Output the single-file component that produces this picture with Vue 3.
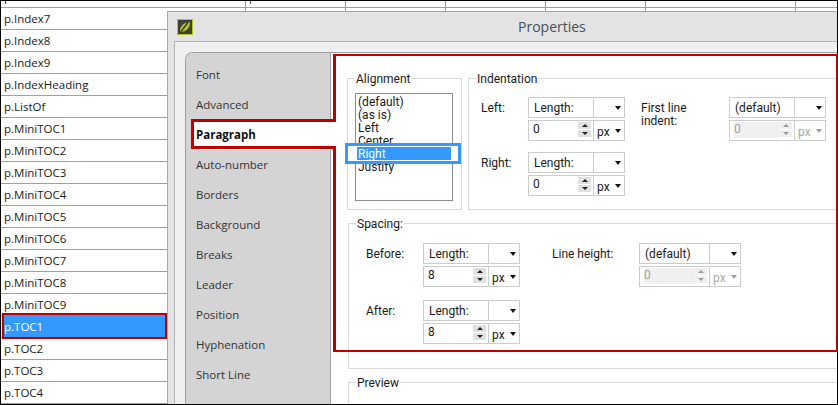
<script setup>
const styles = [
  'Index6', 'Index7', 'Index8', 'Index9', 'IndexHeading', 'ListOf',
  'MiniTOC1', 'MiniTOC2', 'MiniTOC3', 'MiniTOC4', 'MiniTOC5', 'MiniTOC6',
  'MiniTOC7', 'MiniTOC8', 'MiniTOC9', 'TOC1', 'TOC2', 'TOC3', 'TOC4',
]

const tabs = [
  'Font', 'Advanced', 'Paragraph', 'Auto-number', 'Borders', 'Background',
  'Breaks', 'Leader', 'Position', 'Hyphenation', 'Short Line',
]

const alignments = ['(default)', '(as is)', 'Left', 'Center', 'Right', 'Justify']
</script>

<template>
  <div class="app">
    <div class="screen">
      <div
        v-for="(name, i) in styles"
        :key="name"
        class="row"
        :class="{ cut: i === 0, picked: name === 'TOC1' }"
      >
        <div class="cell first"><span>p.{{ name }}</span></div>
        <div v-for="n in 5" :key="n" class="cell" :class="{ wide: n === 5 }">
          <span v-if="i === 0 && n === 1" class="tick">p</span>
        </div>
      </div>

      <div class="dialog">
        <div class="titlebar">
          <svg class="logo" width="16" height="16" viewBox="0 0 16 16">
            <rect x="0.5" y="0.5" width="15" height="15" fill="#3f3f36" stroke="#b4c41f" />
            <path d="M3 13C2.5 8 6 3.5 13 3C13.5 8.5 9.5 13 3 13Z" fill="#b2c225" />
            <path d="M3 14L12 2" stroke="#3f3f36" stroke-width="1.4" fill="none" />
          </svg>
          <span class="title">Properties</span>
        </div>

        <div class="body">
          <div class="panel">
            <div class="tabs">
              <div
                v-for="tab in tabs"
                :key="tab"
                class="tab"
                :class="{ active: tab === 'Paragraph' }"
              >{{ tab }}</div>
            </div>

            <div class="content">
              <div class="top-groups">
                <fieldset class="group align-group">
                  <legend>Alignment</legend>
                  <div class="listbox">
                    <div
                      v-for="a in alignments"
                      :key="a"
                      class="item"
                      :class="{ selected: a === 'Right' }"
                    ><span>{{ a }}</span></div>
                  </div>
                </fieldset>

                <fieldset class="group indent-group">
                  <legend>Indentation</legend>
                  <div class="indent-grid">
                    <div class="label">Left:</div>
                    <div class="ctl">
                      <div class="ctl-row">
                        <div class="main">Length:</div>
                        <div class="side"><i class="arrow"></i></div>
                      </div>
                      <div class="ctl-row">
                        <div class="main num">
                          <span class="value">0</span>
                          <div class="spin"><b><i class="up"></i></b><b><i class="down"></i></b></div>
                        </div>
                        <div class="side"><span class="unit">px</span><i class="arrow"></i></div>
                      </div>
                    </div>
                    <div class="label two-line far">First line<br>indent:</div>
                    <div class="ctl">
                      <div class="ctl-row">
                        <div class="main">(default)</div>
                        <div class="side"><i class="arrow"></i></div>
                      </div>
                      <div class="ctl-row off">
                        <div class="main num">
                          <span class="value">0</span>
                          <div class="spin"><b><i class="up"></i></b><b><i class="down"></i></b></div>
                        </div>
                        <div class="side"><span class="unit">px</span><i class="arrow"></i></div>
                      </div>
                    </div>
                    <div class="label">Right:</div>
                    <div class="ctl">
                      <div class="ctl-row">
                        <div class="main">Length:</div>
                        <div class="side"><i class="arrow"></i></div>
                      </div>
                      <div class="ctl-row">
                        <div class="main num">
                          <span class="value">0</span>
                          <div class="spin"><b><i class="up"></i></b><b><i class="down"></i></b></div>
                        </div>
                        <div class="side"><span class="unit">px</span><i class="arrow"></i></div>
                      </div>
                    </div>
                  </div>
                </fieldset>
              </div>

              <fieldset class="group spacing-group">
                <legend>Spacing:</legend>
                <div class="spacing-grid">
                  <div class="label">Before:</div>
                  <div class="ctl">
                    <div class="ctl-row">
                      <div class="main">Length:</div>
                      <div class="side"><i class="arrow"></i></div>
                    </div>
                    <div class="ctl-row">
                      <div class="main num">
                        <span class="value">8</span>
                        <div class="spin"><b><i class="up"></i></b><b><i class="down"></i></b></div>
                      </div>
                      <div class="side"><span class="unit">px</span><i class="arrow"></i></div>
                    </div>
                  </div>
                  <div class="label far-2">Line height:</div>
                  <div class="ctl long">
                    <div class="ctl-row">
                      <div class="main">(default)</div>
                      <div class="side"><i class="arrow"></i></div>
                    </div>
                    <div class="ctl-row off">
                      <div class="main num">
                        <span class="value">0</span>
                        <div class="spin"><b><i class="up"></i></b><b><i class="down"></i></b></div>
                      </div>
                      <div class="side"><span class="unit">px</span><i class="arrow"></i></div>
                    </div>
                  </div>
                  <div class="label">After:</div>
                  <div class="ctl">
                    <div class="ctl-row">
                      <div class="main">Length:</div>
                      <div class="side"><i class="arrow"></i></div>
                    </div>
                    <div class="ctl-row">
                      <div class="main num">
                        <span class="value">8</span>
                        <div class="spin"><b><i class="up"></i></b><b><i class="down"></i></b></div>
                      </div>
                      <div class="side"><span class="unit">px</span><i class="arrow"></i></div>
                    </div>
                  </div>
                </div>
              </fieldset>

              <fieldset class="group preview-group">
                <legend>Preview</legend>
              </fieldset>
            </div>
          </div>
        </div>
      </div>
    </div>

    <!-- red callout drawn over the tab and the page -->
    <svg class="callout" width="838" height="405" viewBox="0 0 838 405">
      <path
        fill="#c00000"
        fill-rule="evenodd"
        d="M333 54H838V352H333V149H191V119H333ZM336 56V122H194V146H336V350H836V56Z"
      />
    </svg>
  </div>
</template>

<style scoped>
.app {
  position: relative;
  width: 838px;
  height: 405px;
  overflow: hidden;
  font-family: "Open Sans", "Noto Sans", sans-serif;
  font-size: 11.5px;
  color: #1a1a1a;
  background: white;
}

.screen {
  position: relative;
  height: 100%;
  box-sizing: border-box;
  border: 1px solid black;
  overflow: hidden;
}

.row {
  display: flex;
  height: 22px;
  box-sizing: border-box;
  border-bottom: 1px solid #a0a0a0;
}

.row.cut {
  height: 7px;
}

.cell {
  flex: none;
  width: 100px;
  box-sizing: border-box;
  border-right: 1px solid #a0a0a0;
  display: flex;
  align-items: flex-end;
  overflow: hidden;
  padding-left: 3px;
  line-height: 21px;
}

.cell.first {
  width: 245px;
}

.cell.wide {
  width: 150px;
}

/* outlined row: sticks out a little past the row lines */
.row.picked {
  position: relative;
}

.row.picked::before {
  content: "";
  position: absolute;
  left: 1px;
  top: -3px;
  width: 165px;
  height: 26px;
  box-sizing: border-box;
  background: #3399ff;
  border: 2px solid #c00000;
}

.row.picked .first span {
  position: relative;
  color: white;
}

.row.picked .first {
  position: relative;
  overflow: visible;
  border-right-color: transparent;
}

.tick {
  color: #333;
}

.dialog {
  position: absolute;
  left: 166px;
  top: 10px;
  right: -1px;
  bottom: -1px;
  border: 1px solid #a8a8a8;
  border-right: none;
  background: #e3e3e3;
  display: flex;
  flex-direction: column;
}

.titlebar {
  flex: none;
  height: 29px;
  display: flex;
  align-items: center;
  padding-left: 9px;
}

.logo {
  flex: none;
}

.title {
  margin-left: 325px;
  font-size: 14px;
  color: #47505a;
}

.body {
  flex: 1;
  min-height: 0;
  margin-left: 6px;
  border: 1px solid #b5b5b5;
  border-right: none;
  border-bottom: none;
  background: #f0f0f0;
  padding: 10px 0 0 10px;
  display: flex;
}

.panel {
  flex: 1;
  min-width: 0;
  display: flex;
  border: 1px solid #a0a0a0;
  border-right: none;
  border-bottom: none;
  border-top-left-radius: 8px;
  overflow: hidden;
}

.tabs {
  flex: none;
  width: 145px;
  box-sizing: border-box;
  background: #d4d4d4;
  border-right: 1px solid #a0a0a0;
  padding-top: 7px;
}

.tab {
  height: 30px;
  line-height: 30px;
  padding-left: 10px;
  color: #333;
}

.tab.active {
  margin: 0 -1px 0 8px;
  padding-left: 2px;
  background: white;
  font-weight: 700;
  color: #111;
  position: relative;
}

.content {
  flex: 1;
  min-width: 0;
  background: white;
  padding: 17px 0 0 16px;
  font-family: Roboto, "Open Sans", sans-serif;
  font-size: 12px;
}

.top-groups {
  display: flex;
  gap: 6px;
}

.group {
  margin: 0;
  padding: 0;
  min-width: 0;
  border: 1px solid #d9d9d9;
  border-right: none;
}

.group legend {
  margin-left: 7px;
  padding: 0 1px;
  height: 16px;
  line-height: 18px;
}

.align-group {
  flex: none;
  width: 115px;
  box-sizing: border-box;
  border-right: 1px solid #d9d9d9;
}

.listbox {
  width: 98px;
  height: 108px;
  box-sizing: border-box;
  margin: 7px 0 8px 7px;
  border: 1px solid #8a8a94;
  padding-top: 1px;
}

.item {
  height: 13px;
  line-height: 15px;
  padding-left: 2px;
  white-space: nowrap;
}

.item.selected {
  position: relative;
  z-index: 1;
  padding-left: 1px;
  margin: 0 1px;
}

.item.selected::before {
  content: "";
  position: absolute;
  left: -12px;
  right: -10px;
  top: -4px;
  bottom: -4px;
  box-sizing: border-box;
  background: white;
  border: 3px solid #3399ff;
}

.item.selected span {
  position: relative;
  display: block;
  height: 13px;
  margin-left: -1px;
  padding-left: 1px;
  background: #3399ff;
  color: white;
}

.indent-group {
  flex: 1;
  min-width: 0;
}

.indent-grid {
  display: grid;
  grid-template-columns: 47px 97px 104px 97px;
  row-gap: 11px;
  margin: 11px 0 13px 12px;
}

.spacing-group {
  margin: 5px 0 0 1px;
}

.spacing-grid {
  display: grid;
  grid-template-columns: 57px 97px 119px 102px;
  row-gap: 13px;
  margin: 12px 0 24px 17px;
}

.preview-group {
  margin: 5px 0 0 1px;
  height: 60px;
}

.label {
  line-height: 23px;
}

.label.two-line {
  line-height: 13px;
  padding-top: 5px;
}

.label.far {
  padding-left: 16px;
}

.label.far-2 {
  padding-left: 32px;
}

.ctl {
  display: flex;
  flex-direction: column;
  gap: 2px;
}

.ctl-row {
  display: flex;
  height: 21px;
  box-sizing: border-box;
  border: 1px solid #cccccc;
}

.main {
  flex: none;
  width: 65px;
  box-sizing: border-box;
  border-right: 1px solid #cccccc;
  padding-left: 5px;
  line-height: 21px;
}

.ctl.long .main {
  width: 70px;
}

.side {
  flex: 1;
  display: flex;
  align-items: center;
  justify-content: flex-end;
  padding: 0 3px;
}

.unit {
  margin-right: auto;
  padding: 2px 0 0 0;
}

.arrow {
  width: 0;
  height: 0;
  border-left: 3.5px solid transparent;
  border-right: 3.5px solid transparent;
  border-top: 4px solid #111;
}

.num {
  display: flex;
  padding: 1px 2px 2px 4px;
  line-height: 15px;
}

.value {
  flex: 1;
}

.spin {
  flex: none;
  width: 13px;
  height: 15px;
  display: flex;
  flex-direction: column;
  gap: 1px;
  background: white;
}

.spin b {
  flex: 1;
  display: flex;
  align-items: center;
  justify-content: center;
  background: #e1e1e1;
}

.up,
.down {
  width: 0;
  height: 0;
  border-left: 3px solid transparent;
  border-right: 3px solid transparent;
}

.up {
  border-bottom: 3px solid #222;
}

.down {
  border-top: 3px solid #222;
}

.off .num {
  color: #a0a0a0;
}

.off .num .value {
  background: #f0f0f0;
}

.off .spin b {
  background: #efefef;
}

.off .up {
  border-bottom-color: #999;
}

.off .down {
  border-top-color: #999;
}

.off .unit {
  color: #a8a8a8;
}

.off .arrow {
  border-top-color: #a0a0a0;
}

.callout {
  position: absolute;
  left: 0;
  top: 0;
  pointer-events: none;
}
</style>
